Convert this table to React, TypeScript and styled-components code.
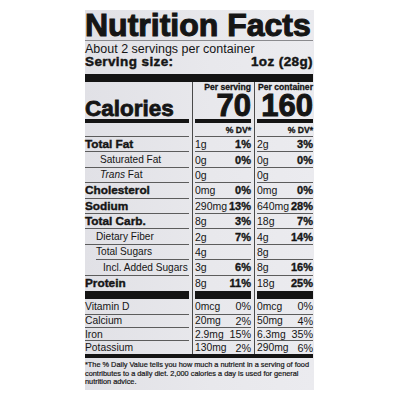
import { FC, ReactNode } from 'react';
import styled, { createGlobalStyle } from 'styled-components';

const GlobalStyle = createGlobalStyle`
  html, body {
    margin: 0;
    padding: 0;
    background: #ffffff;
  }
  body {
    font-family: 'Liberation Sans', Arial, sans-serif;
    color: #151515;
  }
`;

const Page = styled.div`
  padding: 10px 0 0 85px;
`;

const Label = styled.div`
  width: 229px;
  height: 380px;
  box-sizing: border-box;
  padding-right: 1px;
  background: linear-gradient(90deg, #e1e1e6 0%, #e8e8ec 55%, #ebebef 100%);
`;

const Title = styled.h1`
  margin: 0;
  padding-top: 1px;
  border-bottom: 1px solid #8a8a8e;
  font-size: 32px;
  line-height: 29px;
  font-weight: 700;
  white-space: nowrap;
  -webkit-text-stroke: 1.1px #151515;
`;

const Servings = styled.div`
  font-size: 12.5px;
  line-height: 16px;
  white-space: nowrap;
`;

const ServingSize = styled.div`
  display: flex;
  justify-content: space-between;
  font-size: 13.5px;
  line-height: 10px;
  font-weight: 700;
  letter-spacing: 0.4px;
  margin-bottom: 7px;
  -webkit-text-stroke: 0.45px #151515;
`;

const Bar = styled.div<{ $h: number }>`
  height: ${(p) => p.$h}px;
  background: #141414;
`;

const Table = styled.div`
  background:
    linear-gradient(#4a4a4a, #4a4a4a) 107px 0 / 1px 100% no-repeat,
    linear-gradient(#4a4a4a, #4a4a4a) 169px 0 / 1px 100% no-repeat;
`;

const Row = styled.div<{ $h: number }>`
  display: grid;
  grid-template-columns: 104px 56px 56px;
  column-gap: 6px;
  height: ${(p) => p.$h}px;
`;

const Cell = styled.div<{ $rule: number; $inset?: number }>`
  box-sizing: border-box;
  display: flex;
  align-items: center;
  justify-content: space-between;
  margin-left: ${(p) => p.$inset || 0}px;
  border-bottom: ${(p) => (p.$rule ? `${p.$rule}px solid ${p.$rule > 1 ? '#141414' : '#5c5c5c'}` : 'none')};
  white-space: nowrap;
`;

const HeadCell = styled(Cell)`
  flex-direction: column;
  align-items: flex-end;
  justify-content: flex-start;
`;

const CaloriesCell = styled(Cell)`
  align-items: flex-end;
  font-size: 22.5px;
  line-height: 21px;
  font-weight: 700;
  -webkit-text-stroke: 0.8px #151515;
`;

const Small = styled.div`
  font-size: 8.6px;
  line-height: 11px;
  font-weight: 700;
  -webkit-text-stroke: 0.3px #151515;
`;

const Big = styled.div`
  font-size: 31px;
  line-height: 26px;
  font-weight: 700;
  -webkit-text-stroke: 1px #151515;
`;

const DvCell = styled(Cell)`
  justify-content: flex-end;
  padding-top: 1px;
  font-size: 8.6px;
  font-weight: 700;
  -webkit-text-stroke: 0.3px #151515;
`;

const Name = styled.span<{ $bold?: boolean; $indent?: number; $size: number }>`
  padding-left: ${(p) => p.$indent || 0}px;
  font-size: ${(p) => (p.$bold ? 11.8 : p.$size)}px;
  font-weight: ${(p) => (p.$bold ? 700 : 400)};
  -webkit-text-stroke: ${(p) => (p.$bold ? '0.4px #151515' : '0')};
`;

const Amount = styled.span<{ $size: number }>`
  font-size: ${(p) => p.$size}px;
`;

const Pct = styled.span<{ $bold?: boolean; $size: number }>`
  font-size: ${(p) => p.$size}px;
  font-weight: ${(p) => (p.$bold ? 700 : 400)};
  -webkit-text-stroke: ${(p) => (p.$bold ? '0.35px #151515' : '0')};
`;

const Footnote = styled.div`
  padding-top: 3px;
  font-size: 7.35px;
  line-height: 8.7px;
  white-space: nowrap;
  -webkit-text-stroke: 0.2px #151515;
`;

type Pair = [string, string];

interface Item {
  name: ReactNode;
  bold?: boolean;
  indent?: number;
  inset?: number;
  a: Pair;
  b: Pair;
}

const nutrients: Item[] = [
  { name: 'Total Fat', bold: true, a: ['1g', '1%'], b: ['2g', '3%'] },
  { name: 'Saturated Fat', indent: 15, a: ['0g', '0%'], b: ['0g', '0%'] },
  { name: <><i>Trans</i> Fat</>, indent: 15, a: ['0g', ''], b: ['0g', ''] },
  { name: 'Cholesterol', bold: true, a: ['0mg', '0%'], b: ['0mg', '0%'] },
  { name: 'Sodium', bold: true, a: ['290mg', '13%'], b: ['640mg', '28%'] },
  { name: 'Total Carb.', bold: true, a: ['8g', '3%'], b: ['18g', '7%'] },
  { name: 'Dietary Fiber', indent: 11, a: ['2g', '7%'], b: ['4g', '14%'] },
  { name: 'Total Sugars', inset: 11, a: ['4g', ''], b: ['8g', ''] },
  { name: 'Incl. Added Sugars', indent: 18, a: ['3g', '6%'], b: ['8g', '16%'] },
];

const vitamins: { name: string; a: Pair; b: Pair; h: number; rule: number }[] = [
  { name: 'Vitamin D', a: ['0mcg', '0%'], b: ['0mcg', '0%'], h: 15.7, rule: 1 },
  { name: 'Calcium', a: ['20mg', '2%'], b: ['50mg', '4%'], h: 13.4, rule: 1 },
  { name: 'Iron', a: ['2.9mg', '15%'], b: ['6.3mg', '35%'], h: 13.4, rule: 1 },
  { name: 'Potassium', a: ['130mg', '2%'], b: ['290mg', '6%'], h: 12.5, rule: 0 },
];

const Values: FC<{ v: Pair; rule: number; bold: boolean; size: number }> = ({ v, rule, bold, size }) => (
  <Cell $rule={rule}>
    <Amount $size={size}>{v[0]}</Amount>
    <Pct $bold={bold} $size={bold ? 11 : 10.8}>{v[1]}</Pct>
  </Cell>
);

const App: FC = () => {
  return (
    <Page>
      <GlobalStyle />
      <Label>
        <Title>Nutrition Facts</Title>
        <Servings>About 2 servings per container</Servings>
        <ServingSize>
          <span>Serving size:</span>
          <span>1oz (28g)</span>
        </ServingSize>
        <Bar $h={8} />
        <Table>
          <Row $h={41}>
            <CaloriesCell $rule={4}>Calories</CaloriesCell>
            <HeadCell $rule={4}>
              <Small>Per serving</Small>
              <Big>70</Big>
            </HeadCell>
            <HeadCell $rule={4}>
              <Small>Per container</Small>
              <Big>160</Big>
            </HeadCell>
          </Row>
          <Row $h={14}>
            <Cell $rule={1} />
            <DvCell $rule={1}>% DV*</DvCell>
            <DvCell $rule={1}>% DV*</DvCell>
          </Row>
          {nutrients.map((n, i) => (
            <Row key={i} $h={15.4}>
              <Cell $rule={1} $inset={n.inset}>
                <Name $bold={n.bold} $indent={n.indent} $size={10.1}>{n.name}</Name>
              </Cell>
              <Values v={n.a} rule={1} bold size={10.5} />
              <Values v={n.b} rule={1} bold size={10.5} />
            </Row>
          ))}
          <Row $h={23.4}>
            <Cell $rule={8}>
              <Name $bold $size={10.1}>Protein</Name>
            </Cell>
            <Values v={['8g', '11%']} rule={8} bold size={10.5} />
            <Values v={['18g', '25%']} rule={8} bold size={10.5} />
          </Row>
          {vitamins.map((v) => (
            <Row key={v.name} $h={v.h}>
              <Cell $rule={v.rule}>
                <Name $size={10.3}>{v.name}</Name>
              </Cell>
              <Values v={v.a} rule={v.rule} bold={false} size={10.3} />
              <Values v={v.b} rule={v.rule} bold={false} size={10.3} />
            </Row>
          ))}
        </Table>
        <Bar $h={4} />
        <Footnote>
          *The % Daily Value tells you how much a nutrient in a serving of food
          <br />
          contributes to a daily diet. 2,000 calories a day is used for general
          <br />
          nutrition advice.
        </Footnote>
      </Label>
    </Page>
  );
};

export default App;
